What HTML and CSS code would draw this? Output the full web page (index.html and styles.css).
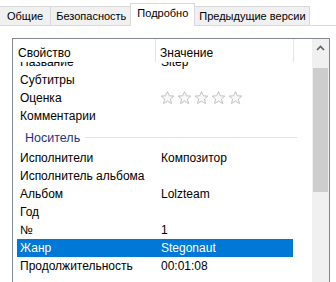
FILE: index.html
```html
<!DOCTYPE html>
<html lang="ru">
<head>
  <meta charset="UTF-8">
  <title>Свойства</title>
  <link rel="stylesheet" href="styles.css">
</head>
<body>

  <div class="tabs">
    <div class="tab first">Общие</div>
    <div class="tab">Безопасность</div>
    <div class="tab active">Подробно</div>
    <div class="tab last">Предыдущие версии</div>
  </div>

  <div class="panel">
    <div class="list">
      <div class="main">
        <div class="header">
          <div class="hcol hname">Свойство</div>
          <div class="hcol hvalue">Значение</div>
          <div class="hcol hrest"></div>
        </div>

        <div class="rows">
          <div class="rows-inner">
            <div class="row"><span class="name">Название</span><span class="value">Sitep</span></div>
            <div class="row"><span class="name">Субтитры</span><span class="value"></span></div>
            <div class="row">
              <span class="name">Оценка</span>
              <span class="value stars">
                <svg width="85" height="14" viewBox="0 0 85 14">
                  <defs>
                    <path id="star" d="M6.5 0.6 L8.3 4.8 L12.8 5.1 L9.4 8 L10.5 12.6 L6.5 10.1 L2.5 12.6 L3.6 8 L0.2 5.1 L4.7 4.8 Z" fill="#f8f8f8" stroke="#c2c2c2" stroke-width="1"/>
                  </defs>
                  <use href="#star" x="0"/>
                  <use href="#star" x="17"/>
                  <use href="#star" x="34"/>
                  <use href="#star" x="51"/>
                  <use href="#star" x="68"/>
                </svg>
              </span>
            </div>
            <div class="row"><span class="name">Комментарии</span><span class="value"></span></div>

            <div class="group">
              <span class="group-title">Носитель</span>
              <span class="group-line"></span>
            </div>

            <div class="row"><span class="name">Исполнители</span><span class="value">Композитор</span></div>
            <div class="row"><span class="name">Исполнитель альбома</span><span class="value"></span></div>
            <div class="row"><span class="name">Альбом</span><span class="value">Lolzteam</span></div>
            <div class="row"><span class="name">Год</span><span class="value"></span></div>
            <div class="row"><span class="name">№</span><span class="value">1</span></div>
            <div class="row selected"><span class="name">Жанр</span><span class="value">Stegonaut</span></div>
            <div class="row"><span class="name">Продолжительность</span><span class="value">00:01:08</span></div>
          </div>
        </div>
      </div>

      <div class="scrollbar">
        <div class="arrow">
          <svg width="9" height="6" viewBox="0 0 9 6">
            <path d="M1 5 L4.5 1.5 L8 5" fill="none" stroke="#606060" stroke-width="1.6"/>
          </svg>
        </div>
        <div class="track-top"></div>
        <div class="thumb"></div>
        <div class="track"></div>
      </div>
    </div>
  </div>

</body>
</html>
```

FILE: styles.css
```css
body {
  margin: 0;
  padding: 0;
  font-family: 'Liberation Sans', Arial, sans-serif;
  font-size: 12px;
  color: #000;
  background: #fff;
  height: 282px;
  overflow: hidden;
}

.tabs {
  display: flex;
  align-items: flex-end;
  box-sizing: border-box;
  height: 26px;
  padding-top: 4px;
  border-bottom: 1px solid #d9d9d9;
  font-size: 11px;
}

.tab {
  height: 18px;
  line-height: 19px;
  padding: 0 6px 0 5px;
  background: #f0f0f0;
  border: 1px solid #d9d9d9;
  border-bottom: none;
  margin-right: -1px;
  white-space: nowrap;
}

.tab.first {
  border-left: none;
  padding: 0 7px;
}

.tab.last {
  padding: 0 3px 0 4px;
}

.tab.active {
  height: 22px;
  line-height: 19px;
  padding: 0 6px;
  margin: 0 -1px -1px -2px;
  background: #fff;
  position: relative;
  z-index: 1;
}

.panel {
  padding: 12px 6px 0 12px;
}

.list {
  display: flex;
  width: 316px;
  height: 250px;
  border: 1px solid #828790;
  border-bottom: none;
}

.main {
  flex: 1;
  display: flex;
  flex-direction: column;
  min-width: 0;
}

.header {
  display: flex;
  height: 23px;
}

.hcol {
  line-height: 17px;
  padding-top: 6px;
  border-right: 1px solid #e5e5e5;
  padding-left: 5px;
  box-sizing: border-box;
}

.hname {
  width: 143px;
}

.hvalue {
  width: 138px;
  padding-left: 4px;
}

.hrest {
  flex: 1;
  border-right: none;
}

.rows {
  flex: 1;
  overflow: hidden;
  padding-left: 4px;
}

.rows-inner {
  width: 276px;
  margin-top: -9px;
}

.row {
  display: flex;
  height: 18px;
  line-height: 18px;
  white-space: nowrap;
}

.row .name {
  width: 140px;
  padding-left: 3px;
}

.row .value {
  flex: 1;
  padding-left: 1px;
}

.row.selected {
  background: #0078d7;
  color: #fff;
}

.stars svg {
  display: block;
  margin-top: 2px;
}

.group {
  display: flex;
  align-items: center;
  box-sizing: border-box;
  height: 24px;
  padding: 1px 0 0 8px;
}

.group-title {
  color: #1e3287;
  font-size: 12.5px;
  margin-right: 5px;
}

.group-line {
  flex: 1;
  height: 1px;
  background: #e2e3ea;
  margin-right: -4px;
}

.scrollbar {
  width: 17px;
  background: #f0f0f0;
  display: flex;
  flex-direction: column;
}

.arrow {
  height: 17px;
  display: flex;
  align-items: center;
  justify-content: center;
}

.track-top {
  height: 12px;
}

.thumb {
  height: 124px;
  margin: 0 1px;
  background: #cdcdcd;
}

.track {
  flex: 1;
}
```
